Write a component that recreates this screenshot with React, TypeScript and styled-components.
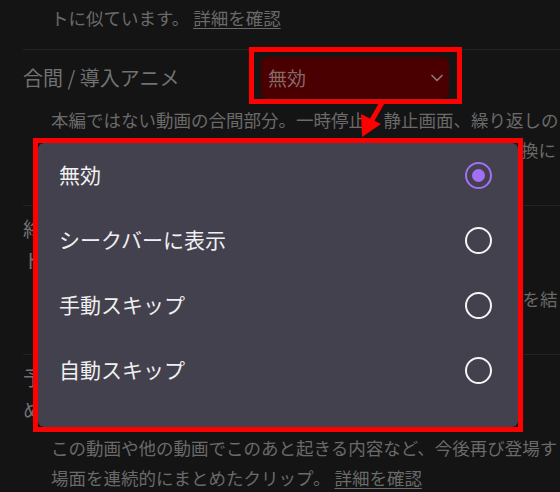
import styled, { createGlobalStyle } from 'styled-components';

const GlobalStyle = createGlobalStyle`
    html, body {
        margin: 0;
        background: #141414;
        overflow: hidden;
    }
    body {
        font-family: 'Noto Sans CJK JP', 'Noto Sans', sans-serif;
    }
`;

const Page = styled.div`
    position: relative;
    width: 560px;
    height: 492px;
    overflow: hidden;
`;

const List = styled.div`
    margin-top: -41px;
    margin-left: 23px;
    width: 640px;
`;

const Row = styled.section<{ $first?: boolean }>`
    border-top: ${({ $first }) => ($first ? 'none' : '1px solid #232323')};
    padding: 7px 0 ${({ $first }) => ($first ? 16 : 10)}px;
`;

const Header = styled.div`
    display: grid;
    grid-template-columns: 238px 188px;
    align-items: center;
    min-height: 41px;
`;

const Label = styled.div`
    font-size: 20px;
    line-height: 32px;
    color: #727272;
    white-space: pre-line;
`;

const Select = styled.div<{ $active?: boolean }>`
    height: 41px;
    box-sizing: border-box;
    display: flex;
    align-items: center;
    justify-content: space-between;
    padding: 0 6px 0 7px;
    border-radius: 6px;
    background: ${({ $active }) => ($active ? '#4a0000' : '#222222')};
    color: ${({ $active }) => ($active ? '#856a6a' : '#6a6a6a')};
    font-size: 19px;
`;

const Desc = styled.div`
    margin: 7px 0 0 28px;
    font-size: 17.5px;
    line-height: 30px;
    color: #6a6a6a;
`;

const Line = styled.span`
    display: block;
    white-space: nowrap;
`;

const Link = styled.span`
    text-decoration: underline;
    text-underline-offset: 3px;
`;

const Annotation = styled.div<{ $x: number; $y: number; $w: number; $h: number }>`
    position: absolute;
    left: ${({ $x }) => $x}px;
    top: ${({ $y }) => $y}px;
    width: ${({ $w }) => $w}px;
    height: ${({ $h }) => $h}px;
    box-sizing: border-box;
    border: 5px solid #ff0000;
    pointer-events: none;
`;

const MenuFrame = styled.div`
    position: absolute;
    left: 33px;
    top: 138px;
    border: 5px solid #ff0000;
    background: #141414;
`;

const Menu = styled.div`
    width: 480px;
    height: 284px;
    box-sizing: border-box;
    padding: 0 0 24px;
    border-radius: 6px;
    background: #43414e;
`;

const Item = styled.div`
    height: 65px;
    display: flex;
    align-items: center;
    justify-content: space-between;
    padding: 0 26px 0 21px;
    font-size: 21px;
    line-height: 28px;
    color: #f0f0f0;
`;

const ItemText = styled.span`
    margin-top: -3px;
`;

const Radio = styled.span<{ $checked?: boolean }>`
    width: 27px;
    height: 27px;
    box-sizing: border-box;
    border-radius: 50%;
    border: 2.6px solid ${({ $checked }) => ($checked ? '#a46ff7' : '#f5f5f5')};
    display: flex;
    align-items: center;
    justify-content: center;

    &::after {
        content: '';
        width: 13px;
        height: 13px;
        border-radius: 50%;
        background: ${({ $checked }) => ($checked ? '#a46ff7' : 'transparent')};
    }
`;

const ArrowLayer = styled.svg`
    position: absolute;
    left: 0;
    top: 0;
    pointer-events: none;
`;

const Chevron = () => (
    <svg width="12" height="8" viewBox="0 0 12 8">
        <path d="M1 1.5 L6 6.5 L11 1.5" fill="none" stroke="#8d7676" strokeWidth="1.7" strokeLinecap="round" strokeLinejoin="round" />
    </svg>
);

type Setting = {
    label: string
    lines: React.ReactNode[]
    active?: boolean
}

const settings: Setting[] = [
    {
        label: '合間 / 導入アニメ',
        active: true,
        lines: [
            '本編ではない動画の合間部分。一時停止、静止画面、繰り返しの',
            'アニメーションなど。クリップやシーンの切り替えや場面転換に',
            <>使われるループ映像。 <Link>詳細を確認</Link></>
        ]
    },
    {
        label: '終了画面 / クレジッ\nト',
        lines: [
            '動画の最後に表示されるクレジットやエンドカードなど。話を結',
            <>ぶ本編とは関係がない部分。 <Link>詳細を確認</Link></>
        ]
    },
    {
        label: '予告 / あらすじのまと\nめ',
        lines: [
            'この動画や他の動画でこのあと起きる内容など、今後再び登場す',
            <>場面を連続的にまとめたクリップ。 <Link>詳細を確認</Link></>
        ]
    }
];

const options = ['無効', 'シークバーに表示', '手動スキップ', '自動スキップ'];

export default function App() {
    return (
        <Page>
            <GlobalStyle />
            <List>
                <Row $first>
                    <Desc>
                        <Line>ループ映像や、タイトルが表示される部分など。オープニングのパー</Line>
                        <Line>トに似ています。 <Link>詳細を確認</Link></Line>
                    </Desc>
                </Row>
                {settings.map(s => (
                    <Row key={s.label}>
                        <Header>
                            <Label>{s.label}</Label>
                            <Select $active={s.active}>
                                <span>無効</span>
                                <Chevron />
                            </Select>
                        </Header>
                        <Desc>
                            {s.lines.map((l, i) => <Line key={i}>{l}</Line>)}
                        </Desc>
                    </Row>
                ))}
            </List>

            <Annotation $x={249} $y={47} $w={213} $h={57} />

            <ArrowLayer width="560" height="492">
                <line x1="383" y1="101" x2="372" y2="120" stroke="#ff0000" strokeWidth="5" />
                <polygon points="362,137 381,124 361,114" fill="#ff0000" />
            </ArrowLayer>

            <MenuFrame>
                <Menu>
                    {options.map((o, i) => (
                        <Item key={o}>
                            <ItemText>{o}</ItemText>
                            <Radio $checked={i === 0} />
                        </Item>
                    ))}
                </Menu>
            </MenuFrame>
        </Page>
    );
}
